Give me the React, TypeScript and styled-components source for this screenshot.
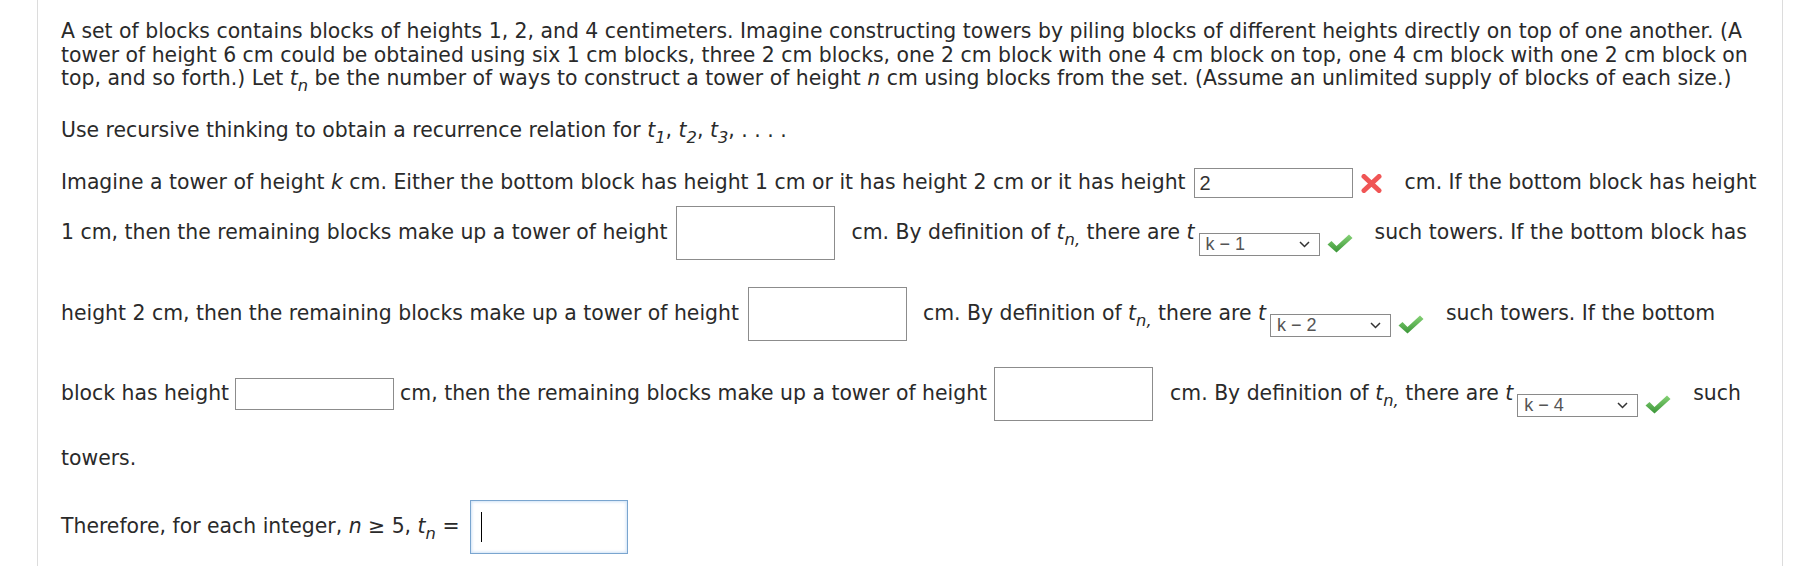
import styled, { createGlobalStyle } from "styled-components";

const GlobalStyle = createGlobalStyle`
  html, body {
    margin: 0;
    padding: 0;
    background: #ffffff;
  }
`

const Page = styled.div`
  width: 1794px;
  height: 566px;
  overflow: hidden;
  background: #fff;
`

// question panel with thin side rules
const Panel = styled.div`
  margin-left: 37px;
  width: 1746px;
  height: 566px;
  box-sizing: border-box;
  border-left: 1px solid #dcdcdc;
  border-right: 1px solid #dcdcdc;
  padding: 20px 0 0 23px;
  font-family: "DejaVu Sans", Verdana, sans-serif;
  font-size: 20.4px;
  color: #2a2a2a;
`

const Para = styled.p<{ $top?: number }>`
  margin: ${(p) => p.$top ?? 0}px 0 0 0;
  width: 1702px;
  line-height: 23.5px;
`

const Row = styled.div<{ $top: number; $h: number }>`
  display: flex;
  align-items: center;
  white-space: pre;
  margin-top: ${(p) => p.$top}px;
  height: ${(p) => p.$h}px;
`

// inline run of text inside a row, so subscripts behave
const Text = styled.span`
  line-height: 23.5px;
`

const Var = styled.i`
  font-style: italic;
`

const Sub = styled.sub`
  font-size: 0.8em;
  font-style: italic;
  vertical-align: -6px;
  line-height: 0;
`

const Box = styled.span<{ $h: number; $gapL?: number; $gapR?: number }>`
  display: inline-block;
  box-sizing: border-box;
  width: 159px;
  height: ${(p) => p.$h}px;
  margin: 0 ${(p) => p.$gapR ?? 15}px 0 ${(p) => p.$gapL ?? 6}px;
  border: 1px solid #8c8c8c;
  background: #fff;
  padding: 3px 5px;
  font-size: 20px;
  line-height: 22px;
  color: #333;
  font-family: "Liberation Sans", Arial, sans-serif;
`

const FocusBox = styled.span`
  display: inline-flex;
  align-items: center;
  box-sizing: border-box;
  width: 158px;
  height: 54px;
  margin-left: 10px;
  border: 1px solid #7aa5cf;
  box-shadow: inset 0 0 3px 1px #cfe2f6;
  padding-left: 10px;
`

const Caret = styled.span`
  display: block;
  width: 1px;
  height: 30px;
  background: #000;
`

const SelectBox = styled.span`
  display: inline-flex;
  align-items: center;
  justify-content: space-between;
  box-sizing: border-box;
  width: 121px;
  height: 23px;
  margin: 22px 0 0 4px;
  border: 1px solid #8a8a8a;
  padding: 0 9px 0 6px;
  font-family: "Liberation Sans", Arial, sans-serif;
  font-size: 18px;
  color: #555;
  background: #fff;
`

const Mark = styled.span<{ $gapR: number; $drop?: number; $gapL?: number }>`
  display: inline-flex;
  margin: ${(p) => p.$drop ?? 0}px ${(p) => p.$gapR}px 0 ${(p) => p.$gapL ?? 8}px;
`

const CrossIcon = () => (
  <svg width="21" height="19" viewBox="0 0 21 19">
    <path
      d="M3 2.5 L18 16.5 M18 2.5 L3 16.5"
      stroke="#f05555"
      strokeWidth="5"
      strokeLinecap="round"
    />
  </svg>
)

const CheckIcon = () => (
  <svg width="26" height="19" viewBox="0 0 26 19">
    <defs>
      <linearGradient id="chk" x1="0" y1="0" x2="0" y2="1">
        <stop offset="0" stopColor="#86d276" />
        <stop offset="1" stopColor="#3b9638" />
      </linearGradient>
    </defs>
    <path
      d="M0.5 10.5 L4.5 7 L9.5 12 L22 0.5 L25.5 4 L9.5 18.5 Z"
      fill="url(#chk)"
    />
  </svg>
)

const Chevron = () => (
  <svg width="11" height="7" viewBox="0 0 11 7">
    <path d="M1 1 L5.5 5.5 L10 1" fill="none" stroke="#333" strokeWidth="1.5" />
  </svg>
)

const Select = ({ label }: { label: string }) => (
  <SelectBox>
    <span>{label}</span>
    <Chevron />
  </SelectBox>
)

const Definition = ({ label }: { label: string }) => (
  <>
    <Text>
      cm. By definition of <Var>t</Var>
      <Sub>n,</Sub> there are <Var>t</Var>
    </Text>
    <Select label={label} />
    <Mark $gapR={22} $gapL={7} $drop={20}>
      <CheckIcon />
    </Mark>
  </>
)

export default function App() {
  return (
    <Page>
      <GlobalStyle />
      <Panel>
        <Para>
          A set of blocks contains blocks of heights 1, 2, and 4 centimeters. Imagine constructing
          towers by piling blocks of different heights directly on top of one another. (A tower of
          height 6 cm could be obtained using six 1 cm blocks, three 2 cm blocks, one 2 cm block with
          one 4 cm block on top, one 4 cm block with one 2 cm block on top, and so forth.) Let{" "}
          <Var>t</Var>
          <Sub>n</Sub> be the number of ways to construct a tower of height <Var>n</Var> cm using
          blocks from the set. (Assume an unlimited supply of blocks of each size.)
        </Para>
        <Para $top={28}>
          Use recursive thinking to obtain a recurrence relation for <Var>t</Var>
          <Sub>1</Sub>, <Var>t</Var>
          <Sub>2</Sub>, <Var>t</Var>
          <Sub>3</Sub>, . . . .
        </Para>

        <Row $top={26} $h={30}>
          <Text>
            Imagine a tower of height <Var>k</Var> cm. Either the bottom block has height 1 cm or it
            has height 2 cm or it has height
          </Text>
          <Box $h={30} $gapL={8} $gapR={0}>2</Box>
          <Mark $gapR={23}>
            <CrossIcon />
          </Mark>
          <Text>cm. If the bottom block has height</Text>
        </Row>

        <Row $top={8} $h={54}>
          <Text>1 cm, then the remaining blocks make up a tower of height</Text>
          <Box $h={54} $gapL={9} $gapR={16} />
          <Definition label="k − 1" />
          <Text>such towers. If the bottom block has</Text>
        </Row>

        <Row $top={27} $h={54}>
          <Text>height 2 cm, then the remaining blocks make up a tower of height</Text>
          <Box $h={54} $gapL={9} $gapR={16} />
          <Definition label="k − 2" />
          <Text>such towers. If the bottom</Text>
        </Row>

        <Row $top={26} $h={54}>
          <Text>block has height</Text>
          <Box $h={32} $gapL={6} $gapR={6} />
          <Text>cm, then the remaining blocks make up a tower of height</Text>
          <Box $h={54} $gapL={7} $gapR={17} />
          <Definition label="k − 4" />
          <Text>such</Text>
        </Row>

        <Row $top={26} $h={24}>
          <Text>towers.</Text>
        </Row>

        <Row $top={29} $h={54}>
          <Text>
            Therefore, for each integer, <Var>n</Var> ≥ 5, <Var>t</Var>
            <Sub>n</Sub> =
          </Text>
          <FocusBox>
            <Caret />
          </FocusBox>
        </Row>
      </Panel>
    </Page>
  )
}
